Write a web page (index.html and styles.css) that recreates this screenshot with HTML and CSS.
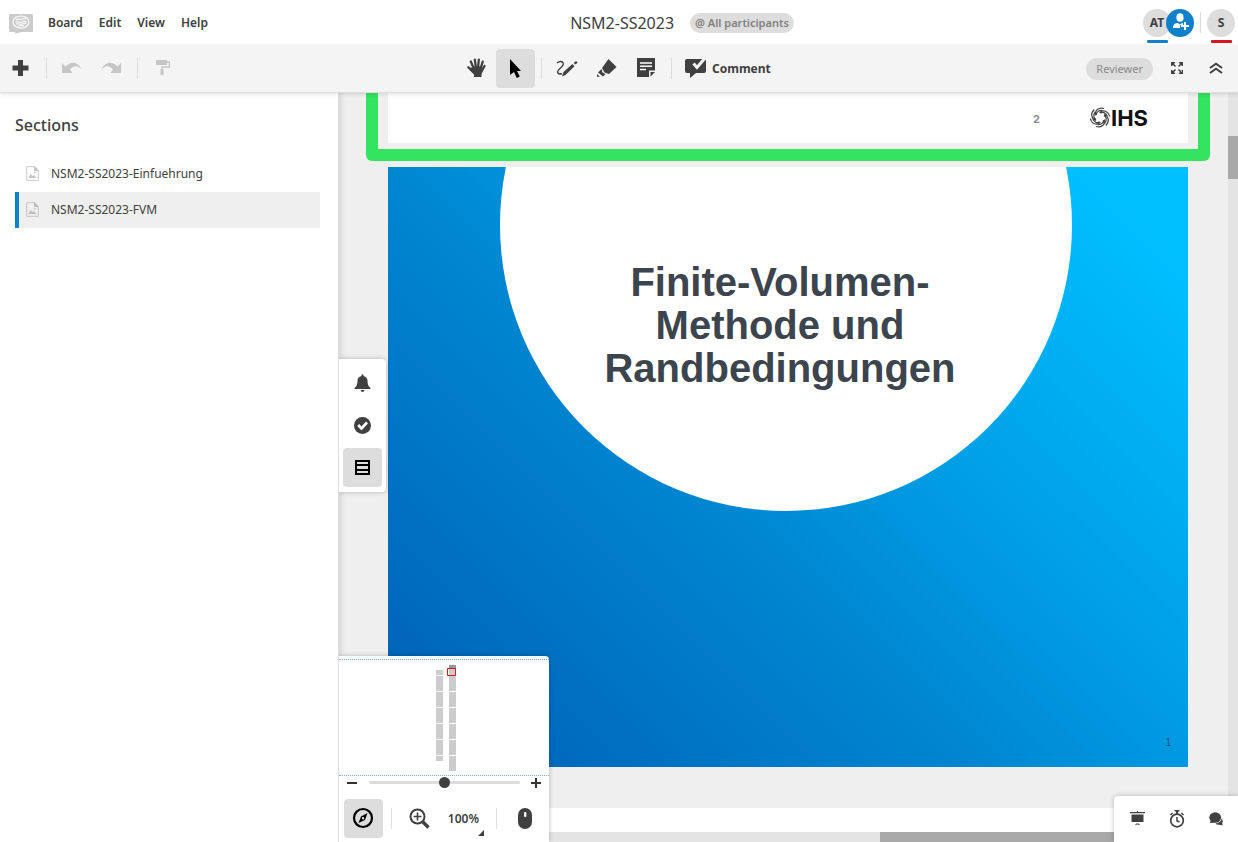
FILE: index.html
```html
<!DOCTYPE html>
<html lang="en">
<head>
<meta charset="utf-8">
<title>NSM2-SS2023</title>
<link rel="stylesheet" href="styles.css">
</head>
<body>
<header class="topbar">
  <div class="topbar-left">
    <svg class="logo" width="24" height="20" viewBox="0 0 24 20"><path fill="#cbcbcb" d="M1 0h22a1 1 0 0 1 1 1v16a1 1 0 0 1-1 1H12l-6 2 .5-2H1a1 1 0 0 1-1-1V1a1 1 0 0 1 1-1z"/><g fill="none" stroke="#fff" stroke-width="1.1"><ellipse cx="12" cy="8" rx="8" ry="6"/><path d="M7 6c2-2 4 0 6-1s3 0 4 0M6.500 8c2-1 4 1 6 0s3-1 5 0M7 10c2-1 4 1 6 0s3-1 4 0M9 12c2-1 3 0 6-.5"/></g></svg>
    <nav class="menu">
      <button>Board</button><button>Edit</button><button>View</button><button>Help</button>
    </nav>
  </div>
  <div class="title-group">
    <h1 class="board-title">NSM2-SS2023</h1>
    <button class="mention">@ All participants</button>
  </div>
  <div class="people">
    <button class="avatar blue-line">AT</button>
    <button class="avatar invite" aria-label="Invite"><svg width="28" height="28" viewBox="0 0 28 28"><g fill="#fff"><ellipse cx="14" cy="8.500" rx="3.600" ry="4.300"/><path d="M7 19c0-4 2.500-5 5-5l2 1.500 2-1.500 1 .2V16h-3v3z"/><path d="M18 13h2v3h3v2h-3v3h-2v-3h-3v-2h3z"/></g></svg></button>
    <span class="divider"></span>
    <button class="avatar red-line">S</button>
  </div>
</header>

<div class="toolbar">
  <div class="tools tools-left">
    <button class="tool" aria-label="Add"><svg width="17" height="17" viewBox="0 0 17 17"><path fill="#404040" d="M6 0h5v5.500h5.500v5H11V16H6v-5.500H.5v-5H6z"/></svg></button>
    <span class="divider"></span>
    <button class="tool" aria-label="Undo"><svg width="21" height="13" viewBox="0 0 21 13"><path fill="#c6c6c6" d="M0 1l3.500 3.500C9-1.500 16-.5 20 8c-4-4.500-8-5-12-.5L10.500 11H0z"/></svg></button>
    <button class="tool" aria-label="Redo"><svg width="21" height="13" viewBox="0 0 21 13"><path fill="#c6c6c6" d="M20 1l-3.500 3.500C11-1.500 4-.5 0 8c4-4.500 8-5 12-.5L9.500 11H20z"/></svg></button>
    <span class="divider"></span>
    <button class="tool" aria-label="Copy format"><svg width="15" height="17" viewBox="0 0 15 17"><path fill="#c6c6c6" d="M0 0h11v5H0z"/><path d="M11 2h2.300v5H6v2" fill="none" stroke="#c6c6c6" stroke-width="1.300"/><path fill="#c6c6c6" d="M4.500 9h3v6h-3z"/></svg></button>
  </div>
  <div class="tools">
    <button class="tool" aria-label="Pan"><svg width="19" height="21" viewBox="0 0 19 21"><g fill="none" stroke="#404040" stroke-width="2.300" stroke-linecap="round"><path d="M7 11L3.800 3.500M9 10L7.800 1.600M11 10l.8-8.400M13.500 11l2.200-7.300M14 14.500L17.500 8M7 14L1.400 9.300"/></g><path fill="#404040" d="M5 9l4-1 5 .5 2 3-1.500 5V19H7v-2.500L2.500 12z"/></svg></button>
    <button class="tool active" aria-label="Select"><svg width="13" height="19" viewBox="0 0 13 19"><path d="M1 0l11 12H8l2.800 5.500-3 1.500L5 13l-4 3z"/></svg></button>
    <span class="divider"></span>
    <button class="tool" aria-label="Draw"><svg width="23" height="18" viewBox="0 0 23 18"><path d="M1 3c4-3 7-1 6 2S0 10 2 13c1 1.500 3 1 4 .5" fill="none" stroke="#404040" stroke-width="1.400"/><path fill="#404040" d="M6 16.500l1.500-4.500 9-8 2 2.300-9 8.700zM17.600 3l1.700-1.600q1.500-.4 2.200 1l-1.700 2z"/></svg></button>
    <button class="tool" aria-label="Erase"><svg width="20" height="19" viewBox="0 0 20 19"><path fill="#404040" d="M11.500 0L19.500 8l-7.500 7-4.500-1.500L5 9zM4.500 10l1 3.500 3 1.500-2.500 2.500-5-4zM0 15l3 2.800H0z"/></svg></button>
    <button class="tool" aria-label="Note"><svg width="20" height="22" viewBox="0 0 20 22"><path fill="#404040" d="M1 0h18v12.500h-6v6.500H1zM14.500 14H19L14.500 18.500z"/><path stroke="#fff" stroke-width="1.500" d="M4 5h12M4 8.200h12M4 11.400h6"/></svg></button>
    <span class="divider"></span>
    <button class="tool comment"><svg width="21" height="22" viewBox="0 0 21 22"><path fill="#404040" d="M2 1h17q2 0 2 2v10q0 2-2 2h-8l-6 5v-5H2q-2 0-2-2V3q0-2 2-2z"/><path d="M8.500 5.500l3.500 4L20 0" fill="none" stroke="#f4f4f4" stroke-width="3"/></svg>Comment</button>
  </div>
  <div class="tools tools-right">
    <button class="role">Reviewer</button>
    <button class="tool" aria-label="Full screen"><svg width="12" height="14" viewBox="0 0 12 14"><path d="M1 1l3.500 3.500M11 1L7.500 4.500M1 11l3.500-3.500M11 11L7.500 7.500M.7 4V.7H4M8 .7h3.300V4M.7 8v3.300H4M8 11.300h3.300V8" fill="none" stroke="#404040" stroke-width="1.500"/></svg></button>
    <button class="tool" aria-label="Collapse"><svg width="14" height="14" viewBox="0 0 14 14"><path d="M1 6l6-4.300L13 6M1 11l6-4.300L13 11" fill="none" stroke="#404040" stroke-width="2"/></svg></button>
  </div>
</div>

<div class="workspace">
  <aside class="sidebar">
    <h2 class="sidebar-title">Sections</h2>
    <a class="section" href="#einfuehrung"><svg width="13" height="17" viewBox="0 0 13 17"><path d="M.7.7H9l3.300 4v9.600H.7z" fill="none" stroke="#c9c9c9"/><path fill="#c4c4c4" d="M8 0l5 5H8zM2.500 12l2-4 1.800 2L8 9l2.500 3zM8 6h1.500v1.500H8z"/></svg>NSM2-SS2023-Einfuehrung</a>
    <a class="section current" href="#fvm"><svg width="13" height="17" viewBox="0 0 13 17"><path d="M.7.7H9l3.300 4v9.600H.7z" fill="none" stroke="#c4c4c4"/><path fill="#bebebe" d="M8 0l5 5H8zM2.500 12l2-4 1.800 2L8 9l2.500 3zM8 6h1.500v1.500H8z"/></svg>NSM2-SS2023-FVM</a>
  </aside>

  <main class="canvas">
    <div class="frame">
      <div class="page page-intro">
        <span class="page-number">2</span>
        <span class="ihs"><svg width="20" height="22" viewBox="0 0 20 22"><g fill="none" stroke="#444" stroke-width="1.200"><path id="blade" d="M14 1.500C8.500 0 4.500 3.500 5.500 8.500M12.500 3.500C8.500 3 6 5.500 6.500 8"/><use href="#blade" transform="rotate(60 10 10.500)"/><use href="#blade" transform="rotate(120 10 10.500)"/><use href="#blade" transform="rotate(180 10 10.500)"/><use href="#blade" transform="rotate(240 10 10.500)"/><use href="#blade" transform="rotate(300 10 10.500)"/></g></svg>IHS</span>
      </div>
    </div>
    <div class="page page-title">
      <svg class="disc" viewBox="0 0 800 600"><circle cx="398" cy="58" r="286" fill="#fff"/></svg>
      <p class="slide-title">Finite-Volumen-<br>Methode und<br>Randbedingungen</p>
      <span class="slide-number">1</span>
    </div>
    <div class="page page-next"></div>
    <div class="scroll-y"><div class="thumb-y"></div></div>
    <div class="scroll-x"><div class="thumb-x"></div></div>

    <div class="side-panel">
      <button class="tool" aria-label="Notifications"><svg width="17" height="19" viewBox="0 0 17 19"><path fill="#404040" d="M7.500 1q1-1.500 2 0v1q4 1 4 5 0 5 3 7v1H.5v-1q3-2 3-7 0-4 4-5zM6.500 16h4q-.5 2-2 2t-2-2z"/></svg></button>
      <button class="tool" aria-label="Tasks"><svg width="17" height="17" viewBox="0 0 17 17"><circle cx="8.500" cy="8.500" r="8.500" fill="#404040"/><path d="M4.200 8L7.500 11.500l5.500-6" fill="none" stroke="#fff" stroke-width="2.600"/></svg></button>
      <button class="tool active" aria-label="Sections"><svg width="15" height="15" viewBox="0 0 15 15"><path d="M1 1h13v13H1z" fill="none" stroke="#000" stroke-width="2"/><path d="M2 5h11M2 10h11" stroke="#000" stroke-width="2"/><path d="M3 3h9M3 7.500h9M3 12h9" stroke="#ddd" stroke-width="1.800"/></svg></button>
    </div>

    <div class="navigator">
      <div class="minimap"><svg width="210" height="115" viewBox="0 0 210 115"><path fill="#ccc" d="M97 10h7v91h-7zM110 8h7v103h-7z"/><path fill="#999" d="M110 5h7v4h-7z"/><path stroke="#fff" d="M97 15.500h7M97 31.500h20M97 47.500h20M97 63.500h20M97 79.500h20M97 95.500h20"/><path d="M108.500 8.500h8v7h-8z" fill="none" stroke="#d9151f"/></svg></div>
      <div class="zoom-row">
        <button class="zoom-step" aria-label="Zoom out"><svg width="12" height="10" viewBox="0 0 12 10"><path d="M1 5h10" stroke="#333" stroke-width="2"/></svg></button>
        <input class="zoom-slider" type="range" min="0" max="100" value="50" aria-label="Zoom">
        <button class="zoom-step" aria-label="Zoom in"><svg width="10" height="10" viewBox="0 0 10 10"><path d="M0 5h10M5 0v10" stroke="#333" stroke-width="2"/></svg></button>
      </div>
      <div class="nav-tools">
        <button class="tool active" aria-label="Navigator"><svg width="23" height="23" viewBox="0 0 23 23"><circle cx="11" cy="11" r="9" fill="none" stroke="#000" stroke-width="2.200"/><path fill="#000" fill-rule="evenodd" d="M15.500 6l-2.500 7-6.500 3L9 9.500zM11 10a1.200 1.200 0 1 0 .1 2.400A1.200 1.200 0 0 0 11 10z"/></svg></button>
        <span class="divider"></span>
        <button class="tool" aria-label="Zoom to fit"><svg width="21" height="21" viewBox="0 0 21 21"><circle cx="8.500" cy="8.500" r="7" fill="none" stroke="#404040" stroke-width="2"/><path d="M4.500 8.500h8M8.500 4.500v8" stroke="#404040" stroke-width="1.600"/><path d="M13.500 13.500l6 6" stroke="#404040" stroke-width="3.400"/></svg></button>
        <button class="zoom-level">100%</button>
        <span class="divider"></span>
        <button class="tool" aria-label="Mouse mode"><svg width="15" height="22" viewBox="0 0 15 22"><rect x="1" width="14" height="21" rx="7" fill="#404040"/><rect x="7" y="4" width="2.400" height="5" rx="1" fill="#fff"/></svg></button>
      </div>
    </div>

    <div class="meeting">
      <button class="tool" aria-label="Present"><svg width="15" height="15" viewBox="0 0 15 15"><path fill="#404040" d="M7 0h1v1h7v1.300H0V1h7zM1.500 3.500h12V11h-12zM5 13.500l1.500-1h2l1.500 1-1 .5-1-.6H7L6 14z"/></svg></button>
      <button class="tool" aria-label="Timer"><svg width="16" height="18" viewBox="0 0 16 18"><circle cx="8" cy="10.500" r="6.300" fill="none" stroke="#404040" stroke-width="1.700"/><path d="M8 7v4l2.500 1" fill="none" stroke="#404040" stroke-width="1.500"/><path fill="#404040" d="M5.500 0h5v1.600H9V4H7V1.600H5.500zM13 2.500l2 2-1 1-2-2zM3 2.500l-2 2 1 1 2-2z"/></svg></button>
      <button class="tool" aria-label="Chat"><svg width="14" height="14" viewBox="0 0 14 14"><ellipse cx="6.200" cy="5.500" rx="5.900" ry="5.200" fill="#404040"/><path fill="#404040" d="M1 11l1-4 4 3.500zM12.700 6.500q1.700 2 .5 4.500l.5 2.500-3-.8q-3 .6-4.200-1.200 5-.4 6.200-5z"/></svg></button>
    </div>
  </main>
</div>
</body>
</html>
```

FILE: styles.css
```css
* { box-sizing: border-box; }
body {
  margin: 0;
  height: 100vh;
  display: flex;
  flex-direction: column;
  overflow: hidden;
  background: #fff;
  color: #404040;
  font: 12px/18px "Noto Sans", "Open Sans", sans-serif;
}
button {
  border: 0;
  padding: 0;
  background: none;
  color: inherit;
  font: inherit;
  cursor: pointer;
}
svg { display: block; flex: none; }
h1, h2, p { margin: 0; font-weight: 400; }

.topbar, .toolbar {
  flex: none;
  display: grid;
  grid-template-columns: 1fr auto 1fr;
  align-items: center;
}
.topbar { height: 45px; }
.topbar-left { display: flex; align-items: center; gap: 15px; padding-left: 9px; }
.logo { margin-top: 2px; }
.menu { display: flex; gap: 16px; font-weight: 600; }
.title-group { display: flex; align-items: center; gap: 16px; padding-left: 126px; }
.board-title { font-size: 16px; line-height: 24px; }
.mention {
  height: 20px;
  padding: 0 5px;
  border-radius: 10px;
  background: #ddd;
  color: #808080;
  font-size: 11px;
  font-weight: 600;
}
.people { display: flex; align-items: center; justify-content: flex-end; padding-right: 3px; }
.avatar {
  position: relative;
  width: 28px;
  height: 28px;
  border-radius: 50%;
  background: #ddd;
  font-weight: 700;
}
.invite { margin-left: -5px; background: #0f80cc; }
.people .divider { margin: 0 6px; }
.blue-line::after, .red-line::after {
  content: "";
  position: absolute;
  left: 4px;
  right: 3px;
  bottom: -6px;
  height: 3px;
  border-radius: 1px;
  background: #0f80cc;
}
.red-line::after { background: #dc141e; }
.divider { flex: none; width: 1px; height: 21px; background: #ddd; }

.toolbar {
  height: 48px;
  background: #f4f4f4;
  border-bottom: 1px solid #ddd;
  box-shadow: 0 1px 4px rgba(0, 0, 0, .12);
  z-index: 2;
}
.tools { display: flex; align-items: center; }
.tool {
  display: flex;
  align-items: center;
  justify-content: center;
  width: 39px;
  height: 39px;
  border-radius: 4px;
}
.tool.active { background: #ddd; }
.tools .divider { margin: 0 6px; }
.tools-left { padding-left: 1px; }
.tools-right { justify-content: flex-end; padding-right: 3px; }
.tool.comment { width: 103px; gap: 6px; padding-left: 7px; justify-content: flex-start; font-weight: 700; }
.role {
  height: 22px;
  margin-right: 4px;
  padding: 0 10px;
  border-radius: 11px;
  background: #ddd;
  color: #8a8a8a;
  font-size: 11px;
}

.workspace { flex: 1; display: flex; min-height: 0; }
.sidebar { flex: none; width: 339px; padding: 20px 18px 0 15px; border-right: 1px solid #ddd; }
.sidebar-title { margin-bottom: 19px; font-size: 16px; line-height: 24px; font-weight: 500; }
.section {
  display: flex;
  align-items: center;
  gap: 12px;
  height: 36px;
  padding-left: 7px;
  border-left: 4px solid transparent;
  color: #404040;
  text-decoration: none;
}
.section.current { border-color: #0f80cc; background: #efefef; }

.canvas {
  position: relative;
  flex: 1;
  overflow: hidden;
  background: #efefef;
  box-shadow: inset 4px 0 5px -2px rgba(0, 0, 0, .12);
}
.frame {
  position: absolute;
  left: 27px;
  bottom: calc(100% - 68px);
  width: 844px;
  padding: 12px;
  border-radius: 6px;
  background: #efefef;
  box-shadow: inset 0 0 0 12px #32e45f;
}
.page { width: 800px; height: 600px; background: #fff; }
.page-intro {
  margin: 0 0 6px 10px;
  height: 400px;
  display: flex;
  align-items: flex-end;
  justify-content: flex-end;
  gap: 50px;
  padding: 0 40px 14px 0;
}
.page-number { color: #858b92; font: 700 11px/20px "Inter", sans-serif; }
.ihs { display: flex; align-items: center; gap: 1px; color: #111; font: 700 22px/22px "Inter", sans-serif; }
.page-title {
  position: absolute;
  left: 49px;
  top: 74px;
  padding-top: 94px;
  background: linear-gradient(45deg, #005eb5 0%, #0087d2 43%, #0099e1 57%, #00bfff 92%);
}
.disc { position: absolute; inset: 0; }
.slide-title {
  position: relative;
  padding-right: 16px;
  color: #3c444e;
  font: 700 40px/43px "Liberation Sans", Arial, sans-serif;
  text-align: center;
}
.slide-number {
  position: absolute;
  right: 17px;
  bottom: 16px;
  color: #1c5277;
  font: 10px/16px "Liberation Sans", Arial, sans-serif;
}
.page-next { position: absolute; left: 49px; top: 715px; }
.scroll-y { position: absolute; top: 0; right: 0; bottom: 0; width: 10px; background: #e4e4e4; }
.thumb-y { height: 43px; margin-top: 43px; background: #a8a8a8; }
.scroll-x { position: absolute; left: 0; right: 10px; bottom: 0; height: 10px; background: #e4e4e4; }
.thumb-x { width: 280px; height: 10px; margin-left: 541px; background: #a8a8a8; }

.side-panel, .navigator, .meeting {
  position: absolute;
  background: #fff;
  box-shadow: 0 0 5px rgba(0, 0, 0, .25);
}
.side-panel {
  left: 0;
  top: 266px;
  display: flex;
  flex-direction: column;
  gap: 3px;
  padding: 5px 4px;
  border-radius: 0 4px 4px 0;
}
.navigator { left: 0; bottom: 0; width: 210px; padding-top: 3px; border-radius: 0 4px 0 0; }
.minimap { border-top: 1px dotted #7ab0d4; border-bottom: 1px dotted #7ab0d4; }
.zoom-row { display: flex; align-items: center; gap: 11px; height: 13px; padding: 0 8px 0 7px; }
.zoom-slider {
  -webkit-appearance: none;
  appearance: none;
  flex: 1;
  min-width: 0;
  height: 11px;
  margin: 0;
  background: none;
}
.zoom-slider::-webkit-slider-runnable-track { height: 3px; border-radius: 2px; background: #ddd; }
.zoom-slider::-webkit-slider-thumb {
  -webkit-appearance: none;
  width: 11px;
  height: 11px;
  margin-top: -4px;
  border-radius: 50%;
  background: #404040;
}
.nav-tools { display: flex; align-items: center; padding: 10px 5px 4px; }
.nav-tools .divider { margin: 0 8px; }
.zoom-level { position: relative; width: 50px; height: 39px; font-weight: 600; }
.zoom-level::after {
  content: "";
  position: absolute;
  right: 4px;
  bottom: 2px;
  border: 3px solid #404040;
  border-top-color: transparent;
  border-left-color: transparent;
}
.meeting {
  right: 0;
  bottom: 0;
  display: flex;
  padding: 3px 3px 4px 4px;
  border-radius: 4px 0 0 0;
}
```
